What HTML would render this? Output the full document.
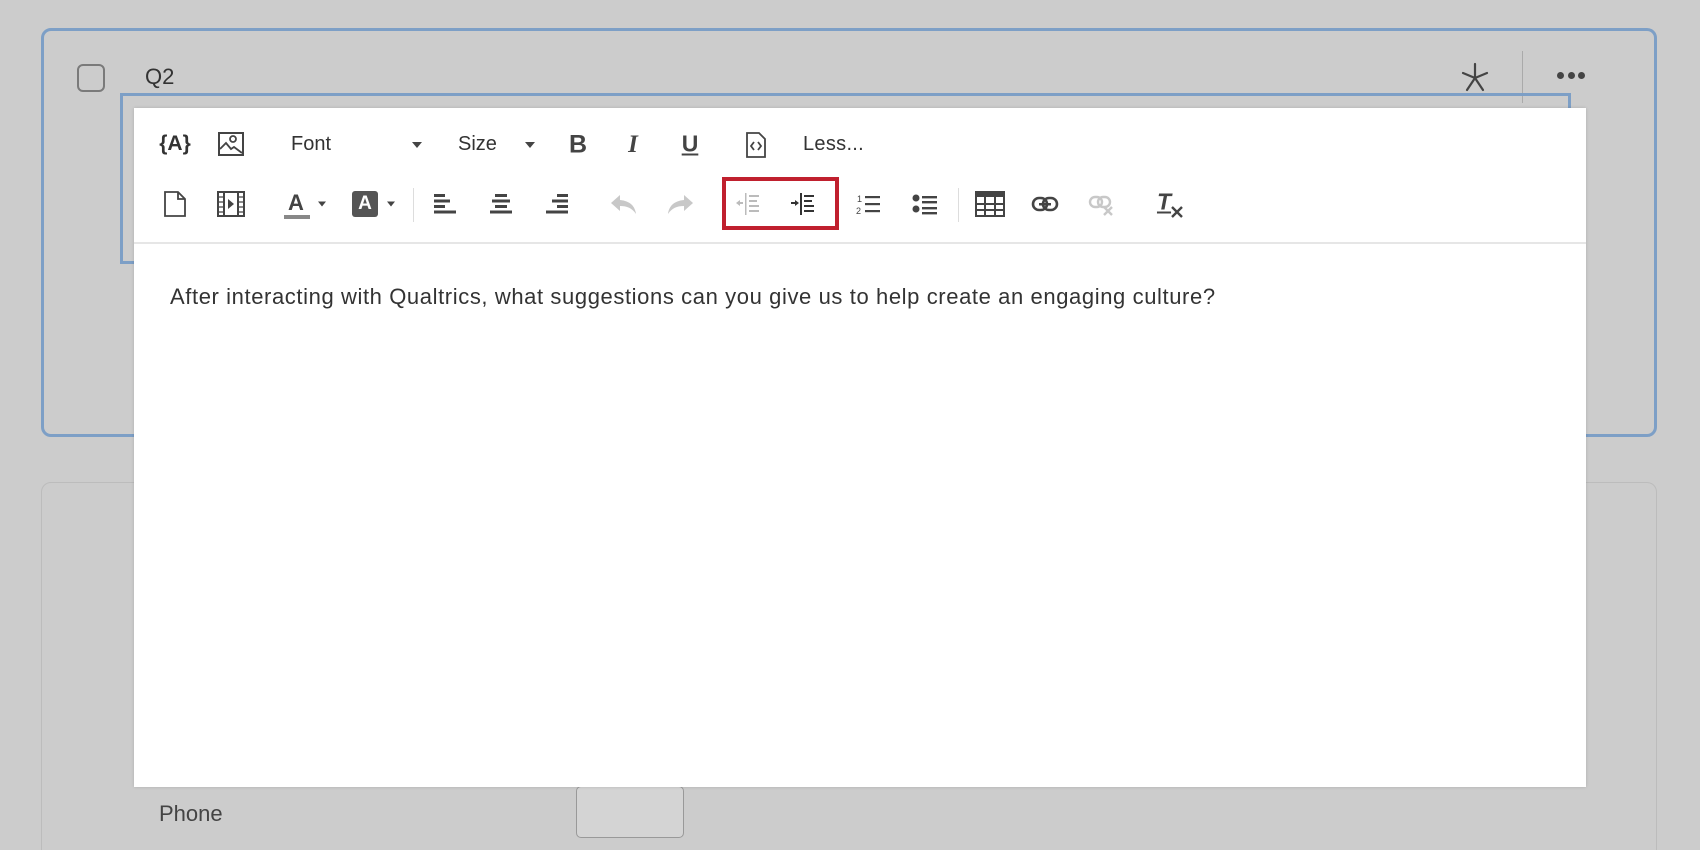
<!DOCTYPE html>
<html><head><meta charset="utf-8"><style>
*{margin:0;padding:0;box-sizing:border-box}
html,body{width:1700px;height:850px;overflow:hidden}
body{background:#cccccc;font-family:"Liberation Sans",Arial,sans-serif;color:#333}
#w{position:relative;width:1700px;height:850px;overflow:hidden}
.a{position:absolute}
.ic{position:absolute;transform:translate(-50%,-50%)}
</style></head><body><div id="w">
<div class="a" style="left:41px;top:28px;width:1616px;height:409px;border:3px solid #7d9fc6;border-radius:10px"></div>
<div class="a" style="left:41px;top:482px;width:1616px;height:400px;border:1.5px solid #bcbcbc;border-radius:10px"></div>
<div class="a" style="left:77px;top:64px;width:28px;height:28px;border:2px solid #7a7a7a;border-radius:6px"></div>
<div class="a" style="left:145px;top:64px;font-size:22px;color:#333">Q2</div>
<svg class="a" style="left:1460px;top:62px" width="30" height="30" viewBox="0 0 30 30"><g stroke="#444" stroke-width="2.2" stroke-linecap="round"><line x1="15" y1="2" x2="15" y2="16"/><line x1="3" y1="11" x2="15" y2="16"/><line x1="27" y1="11" x2="15" y2="16"/><line x1="15" y1="16" x2="7" y2="28"/><line x1="15" y1="16" x2="23" y2="28"/></g></svg>
<div class="a" style="left:1522px;top:51px;width:1px;height:52px;background:#aaa"></div>
<div class="a" style="left:1557px;top:72px;font-size:0">
<span style="display:inline-block;width:7px;height:7px;border-radius:50%;background:#444;margin-right:3.5px"></span><span style="display:inline-block;width:7px;height:7px;border-radius:50%;background:#444;margin-right:3.5px"></span><span style="display:inline-block;width:7px;height:7px;border-radius:50%;background:#444"></span></div>
<div class="a" style="left:120px;top:93px;width:1451px;height:171px;border:3px solid #7d9fc6"></div>
<div class="a" style="left:159px;top:801px;font-size:22px;color:#444">Phone</div>
<div class="a" style="left:576px;top:786px;width:108px;height:52px;border:1.5px solid #999;border-radius:5px;background:#d4d4d4"></div>

<div class="a" style="left:134px;top:108px;width:1452px;height:679px;background:#fff;box-shadow:0 0 3px rgba(0,0,0,.15)"></div>
<div class="a" style="left:134px;top:242px;width:1452px;height:2px;background:#e6e6e6"></div>

<div class="ic" style="left:175px;top:144px;font-size:21px;font-weight:bold;color:#333">{A}</div>
<svg class="ic" style="left:231px;top:144px" width="26" height="24" viewBox="0 0 26 24"><rect x="1" y="1" width="24" height="22" fill="none" stroke="#444" stroke-width="2"/><circle cx="15" cy="7" r="3" fill="none" stroke="#444" stroke-width="1.8"/><path d="M2 17l6-6 5 6 3-2 8 6" fill="none" stroke="#444" stroke-width="1.8"/></svg>
<div class="a" style="left:291px;top:133px;font-size:20px;color:#333">Font</div>
<div class="ic" style="left:417px;top:145px;border:5px solid transparent;border-top:6px solid #444;border-bottom:0"></div>
<div class="a" style="left:458px;top:133px;font-size:20px;color:#333">Size</div>
<div class="ic" style="left:530px;top:145px;border:5px solid transparent;border-top:6px solid #444;border-bottom:0"></div>
<div class="ic" style="left:578px;top:145px;font-size:25px;font-weight:bold;color:#444">B</div>
<div class="ic" style="left:633px;top:145px;font-size:25px;font-weight:bold;font-style:italic;font-family:'Liberation Serif',serif;color:#444">I</div>
<div class="ic" style="left:690px;top:144px;font-size:23px;font-weight:bold;color:#444;text-decoration:underline">U</div>
<svg class="ic" style="left:756px;top:145px" width="20" height="26" viewBox="0 0 20 26"><path d="M1 1h12l6 6v18H1z" fill="none" stroke="#444" stroke-width="1.8"/><path d="M8 10l-3 4 3 4M12 10l3 4-3 4" fill="none" stroke="#444" stroke-width="1.8"/></svg>
<div class="a" style="left:803px;top:133px;font-size:20px;color:#333;letter-spacing:0.3px">Less...</div>

<svg class="ic" style="left:175px;top:204px" width="22" height="26" viewBox="0 0 22 26"><path d="M1 1h13l7 7v17H1z M14 1v7h7" fill="none" stroke="#444" stroke-width="1.8"/></svg>
<svg class="ic" style="left:231px;top:204px" width="28" height="26" viewBox="0 0 28 26"><rect x="1" y="1" width="26" height="24" fill="none" stroke="#444" stroke-width="2"/><line x1="7" y1="1" x2="7" y2="25" stroke="#444" stroke-width="2"/><line x1="21" y1="1" x2="21" y2="25" stroke="#444" stroke-width="2"/><path d="M1 6h6M1 11h6M1 16h6M1 21h6M21 6h6M21 11h6M21 16h6M21 21h6" stroke="#444" stroke-width="1.2"/><path d="M11 8v10l6-5z" fill="#444"/></svg>
<div class="ic" style="left:296px;top:203px;font-size:22px;font-weight:bold;color:#444">A</div>
<div class="ic" style="left:297px;top:217px;width:26px;height:4px;background:#888"></div>
<div class="ic" style="left:322px;top:204px;border:4px solid transparent;border-top:5px solid #444;border-bottom:0"></div>
<div class="ic" style="left:365px;top:204px;width:26px;height:26px;background:#555;border-radius:3px;color:#fff;font-weight:bold;font-size:19px;text-align:center;line-height:26px">A</div>
<div class="ic" style="left:391px;top:204px;border:4px solid transparent;border-top:5px solid #444;border-bottom:0"></div>
<div class="a" style="left:413px;top:188px;width:1px;height:34px;background:#ddd"></div>
<svg class="ic" style="left:445px;top:204px" width="22" height="20" viewBox="0 0 22 20"><g fill="#444"><rect x="0" y="0" width="11" height="3"/><rect x="0" y="5.5" width="16" height="3"/><rect x="0" y="11" width="11" height="3"/><rect x="0" y="16.5" width="22" height="3"/></g></svg>
<svg class="ic" style="left:501px;top:204px" width="22" height="20" viewBox="0 0 22 20"><g fill="#444"><rect x="5" y="0" width="12" height="3"/><rect x="2" y="5.5" width="18" height="3"/><rect x="5" y="11" width="12" height="3"/><rect x="0" y="16.5" width="22" height="3"/></g></svg>
<svg class="ic" style="left:557px;top:204px" width="22" height="20" viewBox="0 0 22 20"><g fill="#444"><rect x="11" y="0" width="11" height="3"/><rect x="6" y="5.5" width="16" height="3"/><rect x="11" y="11" width="11" height="3"/><rect x="0" y="16.5" width="22" height="3"/></g></svg>
<svg class="ic" style="left:624px;top:204px" width="28" height="22" viewBox="0 0 28 22"><path d="M10 2L1 10l9 8v-5c7 0 12 2 16 8-1-8-6-13-16-14z" fill="#c8c8c8"/></svg>
<svg class="ic" style="left:680px;top:204px" width="28" height="22" viewBox="0 0 28 22"><path d="M18 2l9 8-9 8v-5c-7 0-12 2-16 8 1-8 6-13 16-14z" fill="#c8c8c8"/></svg>
<svg class="ic" style="left:748px;top:204px" width="26" height="22" viewBox="0 0 26 22"><g fill="#bbb"><rect x="10" y="0" width="1.5" height="22"/><rect x="14" y="2" width="10" height="2"/><rect x="14" y="7" width="8" height="2"/><rect x="14" y="12" width="10" height="2"/><rect x="14" y="17" width="10" height="2"/><path d="M1 10l4-3v2h3v2H5v2z"/></g></svg>
<svg class="ic" style="left:803px;top:204px" width="26" height="22" viewBox="0 0 26 22"><g fill="#333"><rect x="10" y="0" width="2" height="22"/><rect x="14" y="2" width="10" height="2"/><rect x="14" y="7" width="8" height="2"/><rect x="14" y="12" width="10" height="2"/><rect x="14" y="17" width="10" height="2"/><path d="M9 10l-4-3v2H1v2h4v2z"/></g></svg>
<div class="a" style="left:722px;top:177px;width:117px;height:53px;border:4px solid #c0202e"></div>
<svg class="ic" style="left:868px;top:204px" width="24" height="22" viewBox="0 0 24 22"><g fill="#444"><rect x="9" y="3" width="15" height="2.2"/><rect x="9" y="10" width="15" height="2.2"/><rect x="9" y="17" width="15" height="2.2"/></g><text x="1" y="9" font-size="9" font-family="Liberation Sans" fill="#444">1</text><text x="0" y="21" font-size="9" font-family="Liberation Sans" fill="#444">2</text></svg>
<svg class="ic" style="left:925px;top:204px" width="26" height="22" viewBox="0 0 26 22"><g fill="#444"><circle cx="4" cy="5" r="3.5"/><circle cx="4" cy="16" r="3.5"/><rect x="10" y="3" width="15" height="2.4"/><rect x="10" y="8" width="15" height="2.4"/><rect x="10" y="14" width="15" height="2.4"/><rect x="10" y="19" width="15" height="2.4"/></g></svg>
<div class="a" style="left:958px;top:188px;width:1px;height:34px;background:#ddd"></div>
<svg class="ic" style="left:990px;top:204px" width="30" height="26" viewBox="0 0 30 26"><rect x="1" y="1" width="28" height="24" fill="none" stroke="#444" stroke-width="2"/><rect x="1" y="1" width="28" height="5" fill="#444"/><path d="M1 13h28M1 19h28M10 1v24M20 1v24" stroke="#444" stroke-width="2"/></svg>
<svg class="ic" style="left:1045px;top:204px" width="28" height="16" viewBox="0 0 28 16"><rect x="2" y="2" width="14" height="12" rx="6" fill="none" stroke="#444" stroke-width="2.6"/><rect x="12" y="2" width="14" height="12" rx="6" fill="none" stroke="#444" stroke-width="2.6"/><rect x="8" y="7" width="12" height="2.5" fill="#444"/></svg>
<svg class="ic" style="left:1102px;top:206px" width="28" height="22" viewBox="0 0 28 22"><rect x="2" y="2" width="12" height="10" rx="5" fill="none" stroke="#c8c8c8" stroke-width="2.4"/><rect x="10" y="2" width="12" height="10" rx="5" fill="none" stroke="#c8c8c8" stroke-width="2.4"/><path d="M16 12l8 8M24 12l-8 8" stroke="#c8c8c8" stroke-width="2.4"/></svg>
<div class="ic" style="left:1164px;top:202px;font-size:23px;font-weight:bold;font-style:italic;color:#444;text-decoration:underline">T</div>
<svg class="ic" style="left:1177px;top:212px" width="12" height="12" viewBox="0 0 12 12"><path d="M1 1l10 10M11 1L1 11" stroke="#444" stroke-width="2.4"/></svg>

<div class="a" style="left:170px;top:284px;font-size:22px;letter-spacing:0.6px;color:#333;white-space:nowrap">After interacting with Qualtrics, what suggestions can you give us to help create an engaging culture?</div>
</div></body></html>
